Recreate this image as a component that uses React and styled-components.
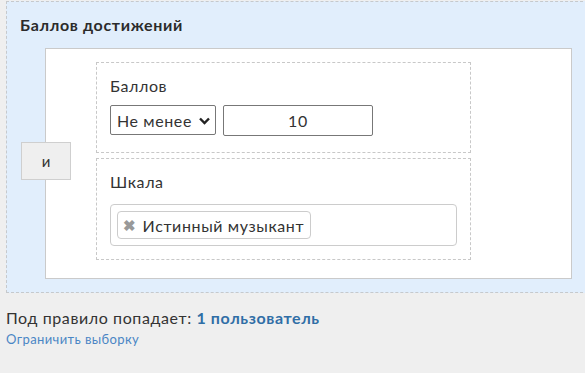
import React from 'react';
import styled, { createGlobalStyle } from 'styled-components';

const GlobalStyle = createGlobalStyle`
  html, body {
    margin: 0;
    padding: 0;
    background: #efefef;
    overflow: hidden;
  }
  body {
    font-family: Lato, "Open Sans", sans-serif;
    letter-spacing: 0.6px;
    color: #333;
  }
`;

const Page = styled.div`
  width: 585px;
  height: 373px;
  overflow: hidden;
`;

const Panel = styled.div`
  margin: 1px 0 0 6px;
  width: 600px;
  background: #e1eefc;
  border: 1px dashed #c6c9cc;
  padding: 13px 0 13px 0;
`;

const Title = styled.div`
  font-size: 16px;
  font-weight: 700;
  line-height: 20px;
  letter-spacing: 0.65px;
  padding-left: 13px;
  color: #2b2b2b;
`;

const Condition = styled.div`
  display: flex;
  align-items: center;
  margin: 13px 0 0 38px;
  width: 525px;
  background: #fff;
  border: 1px solid #cacaca;
  padding: 13px 0 18px 0;
`;

const JoinButton = styled.button`
  flex: none;
  width: 50px;
  height: 38px;
  margin-left: -25px;
  margin-right: 25px;
  background: #efefef;
  border: 1px solid #cfcfcf;
  font-family: inherit;
  font-size: 15px;
  color: #333;
  padding: 0;
`;

const Groups = styled.div`
  display: flex;
  flex-direction: column;
  gap: 5px;
  width: 375px;
`;

const Group = styled.div`
  border: 1px dashed #c8c8c8;
  padding: ${(p) => p.$pad};
`;

const Label = styled.div`
  font-size: 16px;
  line-height: 20px;
  color: #333;
  margin-bottom: ${(p) => p.$gap}px;
`;

const Row = styled.div`
  display: flex;
  gap: 7px;
`;

const Select = styled.div`
  display: flex;
  align-items: center;
  width: 106px;
  height: 30px;
  box-sizing: border-box;
  border: 1px solid #777;
  border-radius: 2px;
  padding: 0 4px 0 6px;
  font-size: 16px;
  color: #333;
  justify-content: space-between;
`;

const NumberInput = styled.div`
  width: 150px;
  height: 31px;
  box-sizing: border-box;
  border: 1px solid #777;
  border-radius: 2px;
  display: flex;
  align-items: center;
  justify-content: center;
  font-size: 16px;
  color: #333;
`;

const MultiBox = styled.div`
  width: 347px;
  height: 42px;
  box-sizing: border-box;
  border: 1px solid #ccc;
  border-radius: 4px;
  padding: 6px;
  display: flex;
  align-items: center;
`;

const Tag = styled.div`
  display: flex;
  align-items: center;
  height: 28px;
  box-sizing: border-box;
  border: 1px solid #ccc;
  border-radius: 4px;
  background: #fff;
  padding: 0 6px 0 5px;
  font-size: 16px;
  color: #333;
`;

const Remove = styled.span`
  font-size: 15px;
  font-weight: 700;
  color: #999;
  margin-right: 6px;
`;

const Footer = styled.div`
  padding: 15px 0 0 6px;
`;

const Summary = styled.div`
  font-size: 16px;
  line-height: 20px;
  color: #333;

  b {
    color: #2f6ea6;
  }
`;

const Link = styled.a`
  display: block;
  margin-top: 2px;
  font-size: 13px;
  line-height: 18px;
  letter-spacing: 0.4px;
  color: #4a86c5;
  text-decoration: none;
`;

function Chevron() {
  return (
    <svg width="13" height="9" viewBox="0 0 13 9">
      <path d="M2 2.5 L6.5 7 L11 2.5" fill="none" stroke="#222" strokeWidth="2.4" />
    </svg>
  );
}

export default function App() {
  return (
    <Page>
      <GlobalStyle />
      <Panel>
        <Title>Баллов достижений</Title>
        <Condition>
          <JoinButton>и</JoinButton>
          <Groups>
            <Group $pad="13px 13px 16px">
              <Label $gap={9}>Баллов</Label>
              <Row>
                <Select>
                  Не менее
                  <Chevron />
                </Select>
                <NumberInput>10</NumberInput>
              </Row>
            </Group>
            <Group $pad="13px 13px 13px">
              <Label $gap={12}>Шкала</Label>
              <MultiBox>
                <Tag>
                  <Remove>✖</Remove>
                  Истинный музыкант
                </Tag>
              </MultiBox>
            </Group>
          </Groups>
        </Condition>
      </Panel>
      <Footer>
        <Summary>
          Под правило попадает: <b>1 пользователь</b>
        </Summary>
        <Link href="#">Ограничить выборку</Link>
      </Footer>
    </Page>
  );
}
